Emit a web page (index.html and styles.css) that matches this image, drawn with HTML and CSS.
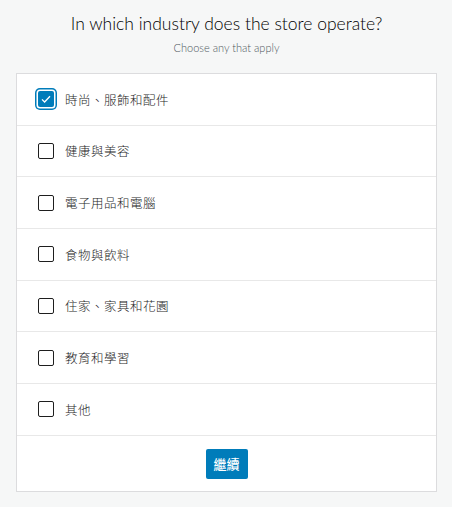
FILE: index.html
```html
<!DOCTYPE html>
<html lang="zh-Hant">
<head>
<meta charset="utf-8">
<link rel="stylesheet" href="styles.css">
</head>
<body>
<div class="page">
  <h1 class="title">In which industry does the store operate?</h1>
  <p class="subtitle">Choose any that apply</p>
  <div class="card">
    <label class="row"><span class="box checked"><svg viewBox="0 0 16 16" width="16" height="16"><path d="M4 8.4l2.6 2.6L12 5.2" fill="none" stroke="#fff" stroke-width="1.3"/></svg></span><span class="label">時尚、服飾和配件</span></label>
    <label class="row"><span class="box"></span><span class="label">健康與美容</span></label>
    <label class="row"><span class="box"></span><span class="label">電子用品和電腦</span></label>
    <label class="row"><span class="box"></span><span class="label">食物與飲料</span></label>
    <label class="row"><span class="box"></span><span class="label">住家、家具和花園</span></label>
    <label class="row"><span class="box"></span><span class="label">教育和學習</span></label>
    <label class="row"><span class="box"></span><span class="label">其他</span></label>
    <div class="footer"><button class="btn">繼續</button></div>
  </div>
</div>
</body>
</html>
```
FILE: styles.css
```css
html, body {
  margin: 0;
  padding: 0;
  background: #f6f7f7;
  font-family: Lato, "Noto Sans CJK TC", sans-serif;
}
.page {
  padding: 11px 15px 0 16px;
}
.title {
  margin: 0;
  text-align: center;
  font-size: 17.5px;
  font-weight: 300;
  line-height: 26px;
  color: #000;
}
.subtitle {
  margin: 3px 0 0;
  text-align: center;
  font-size: 11px;
  font-weight: 300;
  line-height: 16px;
  color: #50575e;
}
.card {
  margin-top: 17px;
  background: #fff;
  border: 1px solid #dcdcde;
  box-sizing: border-box;
  width: 421px;
}
.row {
  display: flex;
  align-items: center;
  gap: 11px;
  height: 51.67px;
  box-sizing: border-box;
  padding: 0 0 0 21px;
  border-bottom: 1px solid #e8e8e8;
}
.box {
  width: 16px;
  height: 16px;
  box-sizing: border-box;
  border: 1.5px solid #1e1e1e;
  border-radius: 2px;
  display: flex;
  align-items: center;
  justify-content: center;
  flex: none;
}
.box.checked {
  background: #007cba;
  border: none;
  box-shadow: 0 0 0 1.5px #fff, 0 0 0 3px #007cba;
}
.label {
  font-family: "Noto Sans CJK TC", sans-serif;
  font-weight: 300;
  font-size: 12.5px;
  color: #1e1e1e;
  letter-spacing: 0.5px;
}
.footer {
  height: 55px;
  display: flex;
  align-items: center;
  justify-content: center;
}
.btn {
  width: 42px;
  height: 30px;
  border: none;
  border-radius: 2px;
  background: #007cba;
  color: #fff;
  font-family: "Noto Sans CJK TC", sans-serif;
  font-size: 13px;
  font-weight: 500;
  padding: 0;
  margin-top: 1px;
}
```
